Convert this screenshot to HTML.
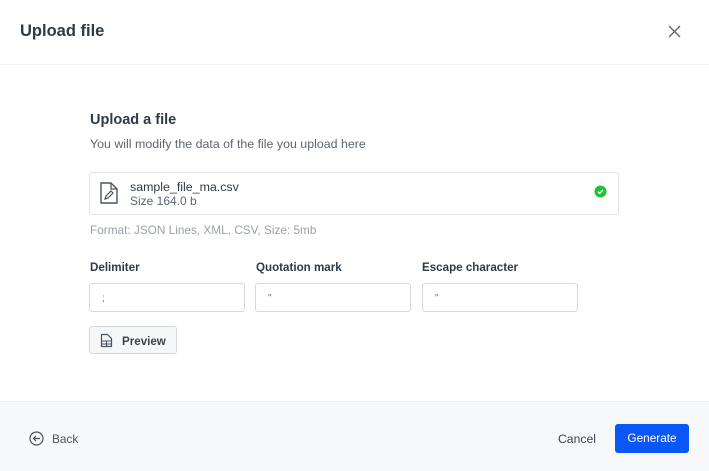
<!DOCTYPE html>
<html><head><style>
*{box-sizing:border-box;margin:0;padding:0}
body{width:709px;height:471px;background:#fff;font-family:"Liberation Sans",sans-serif;color:#384350;position:relative;overflow:hidden}
.abs{position:absolute}
.hdr{left:0;top:0;width:709px;height:65px;border-bottom:1px solid #eef0f2}
.title{left:20px;top:22px;font-size:16.5px;font-weight:bold;color:#2f3a45}
.h2{left:90px;top:112px;font-size:14.5px;font-weight:bold;color:#2f3a45}
.sub{left:90px;top:137px;font-size:12.4px;color:#5c6670}
.card{left:89px;top:172px;width:530px;height:43px;border:1px solid #e2e5e8;border-radius:3px}
.fmt{left:90px;top:223px;font-size:11.8px;color:#9aa1a8}
.lbl{top:261px;font-size:11.6px;font-weight:bold;color:#2f3a45}
.inp{top:283px;width:156px;height:29px;border:1px solid #d5d9dd;border-radius:3px;font-size:10px;color:#6b747d;padding:9px 0 0 12px}
.prev{left:89px;top:326px;width:88px;height:28px;border:1px solid #d5d9dd;border-radius:3px;background:#f6f7f8}
.foot{left:0;top:401px;width:709px;height:70px;background:#f7f8fa;border-top:1px solid #eef0f2}
.gen{left:615px;top:424px;width:74px;height:29px;background:#0b57f5;border-radius:3px;color:#fff;font-size:11.8px;text-align:center;line-height:29px}
</style></head><body>
<div class="abs hdr"></div>
<div class="abs title">Upload file</div>
<svg class="abs" style="left:668px;top:25px" width="13" height="13" viewBox="0 0 13 13"><path d="M1 1L12 12M12 1L1 12" stroke="#5c6670" stroke-width="1.3"/></svg>
<div class="abs h2">Upload a file</div>
<div class="abs sub">You will modify the data of the file you upload here</div>
<div class="abs card"></div>
<svg class="abs" style="left:99px;top:181px" width="20" height="24" viewBox="0 0 20 24"><path d="M2 2h10l6 6v14H2z" fill="none" stroke="#4a545e" stroke-width="1.4" stroke-linejoin="round"/><path d="M12 2v6h6" fill="none" stroke="#4a545e" stroke-width="1.3"/><path d="M6 18l1-3 5-5 2 2-5 5z" fill="none" stroke="#4a545e" stroke-width="1.2"/></svg>
<div class="abs" style="left:130px;top:180px;font-size:12.4px;color:#2f3a45">sample_file_ma.csv</div>
<div class="abs" style="left:130px;top:194px;font-size:12px;color:#5c6670">Size 164.0 b</div>
<svg class="abs" style="left:594px;top:185px" width="13" height="13" viewBox="0 0 13 13"><circle cx="6.5" cy="6.5" r="6" fill="#1ac43a"/><path d="M4 6.8l1.7 1.6L9 5" fill="none" stroke="#fff" stroke-width="1.4"/></svg>
<div class="abs fmt">Format: JSON Lines, XML, CSV, Size: 5mb</div>
<div class="abs lbl" style="left:90px">Delimiter</div>
<div class="abs lbl" style="left:256px">Quotation mark</div>
<div class="abs lbl" style="left:422px">Escape character</div>
<div class="abs inp" style="left:89px">;</div>
<div class="abs inp" style="left:255px">"</div>
<div class="abs inp" style="left:422px">"</div>
<div class="abs prev"></div>
<svg class="abs" style="left:100px;top:333px" width="13" height="15" viewBox="0 0 13 15"><path d="M1.5 1.5h6l4 4v8h-10z" fill="none" stroke="#4a545e" stroke-width="1.2" stroke-linejoin="round"/><path d="M1.5 8h10M1.5 11h10M6.5 8v5.5" stroke="#4a545e" stroke-width="1.1"/></svg>
<div class="abs" style="left:122px;top:335px;font-size:11.6px;font-weight:bold;color:#384350">Preview</div>
<div class="abs foot"></div>
<svg class="abs" style="left:29px;top:431px" width="15" height="15" viewBox="0 0 15 15"><circle cx="7.5" cy="7.5" r="6.5" fill="none" stroke="#4a545e" stroke-width="1.2"/><path d="M11 7.5H4.5M7 5L4.5 7.5 7 10" fill="none" stroke="#4a545e" stroke-width="1.2"/></svg>
<div class="abs" style="left:52px;top:432px;font-size:11.8px;color:#4a545e">Back</div>
<div class="abs" style="left:558px;top:432px;font-size:12.2px;color:#384350">Cancel</div>
<div class="abs gen">Generate</div>
</body></html>
